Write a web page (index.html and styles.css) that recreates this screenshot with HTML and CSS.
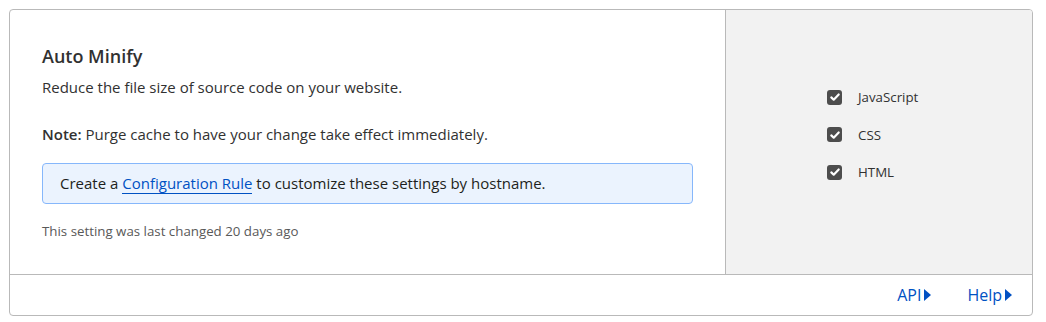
FILE: index.html
```html
<!DOCTYPE html>
<html lang="en">
<head>
    <meta charset="UTF-8">
    <title>Auto Minify</title>
    <link rel="stylesheet" href="styles.css">
</head>
<body>
    <div class="setting-card">
        <div class="setting-main">
            <div class="setting-info">
                <h2 class="setting-title">Auto Minify</h2>
                <p class="setting-desc">Reduce the file size of source code on your website.</p>
                <p class="setting-note"><strong>Note:</strong> Purge cache to have your change take effect immediately.</p>
                <div class="info-box">
                    Create a <a href="#" class="link">Configuration Rule</a> to customize these settings by hostname.
                </div>
                <p class="last-changed">This setting was last changed 20 days ago</p>
            </div>
            <div class="setting-control">
                <ul class="check-list">
                    <li><span class="check"><svg viewBox="0 0 14 14" width="14" height="14"><path d="M3.3 7.4l2.4 2.3 5-5.2" fill="none" stroke="#fff" stroke-width="2.2" stroke-linecap="round" stroke-linejoin="round"/></svg></span>JavaScript</li>
                    <li><span class="check"><svg viewBox="0 0 14 14" width="14" height="14"><path d="M3.3 7.4l2.4 2.3 5-5.2" fill="none" stroke="#fff" stroke-width="2.2" stroke-linecap="round" stroke-linejoin="round"/></svg></span>CSS</li>
                    <li><span class="check"><svg viewBox="0 0 14 14" width="14" height="14"><path d="M3.3 7.4l2.4 2.3 5-5.2" fill="none" stroke="#fff" stroke-width="2.2" stroke-linecap="round" stroke-linejoin="round"/></svg></span>HTML</li>
                </ul>
            </div>
        </div>
        <div class="setting-footer">
            <a href="#" class="footer-link">API<span class="arrow"></span></a>
            <a href="#" class="footer-link">Help<span class="arrow"></span></a>
        </div>
    </div>
</body>
</html>
```

FILE: styles.css
```css
* {
    margin: 0;
    padding: 0;
    box-sizing: border-box;
}

body {
    font-family: 'Segoe UI', 'Open Sans', 'Noto Sans', sans-serif;
    background: #fff;
    color: #313131;
    padding: 9px 13px 6px 9px;
}

.setting-card {
    border: 1px solid #b9b9b9;
    border-radius: 4px;
    overflow: hidden;
}

.setting-main {
    display: flex;
    height: 265px;
    border-bottom: 1px solid #b9b9b9;
}

.setting-info {
    flex: 1;
    padding: 34px 32px 0 32px;
}

.setting-title {
    font-size: 18px;
    font-weight: 600;
    line-height: 24px;
    color: #313131;
    margin-bottom: 9px;
}

.setting-desc,
.setting-note {
    font-size: 15px;
    line-height: 20px;
}

.setting-desc {
    margin-bottom: 27px;
}

.setting-note {
    margin-bottom: 19px;
}

.setting-note strong {
    font-weight: 600;
}

.info-box {
    width: 651px;
    height: 41px;
    background: #ebf3fe;
    border: 1px solid #86b7fb;
    border-radius: 4px;
    font-size: 15px;
    line-height: 39px;
    padding-left: 17px;
    color: #1d1f20;
}

.link {
    color: #0051c3;
    text-decoration: none;
    border-bottom: 1px solid #0051c3;
}

.last-changed {
    font-size: 13.3px;
    color: #595959;
    margin-top: 18px;
}

.setting-control {
    width: 307px;
    background: #f2f2f2;
    border-left: 1px solid #b9b9b9;
    padding: 78px 0 0 101px;
}

.check-list {
    list-style: none;
}

.check-list li {
    display: flex;
    align-items: center;
    font-size: 13.3px;
    line-height: 18px;
    color: #313131;
    height: 18px;
    margin-bottom: 19.5px;
}

.check {
    width: 15px;
    height: 15px;
    background: #4d4d4d;
    border-radius: 3px;
    margin-right: 16px;
    display: flex;
    align-items: center;
    justify-content: center;
}

.setting-footer {
    height: 40px;
    display: flex;
    justify-content: flex-end;
    align-items: center;
    gap: 36px;
    padding-right: 20px;
}

.footer-link {
    color: #0051c3;
    text-decoration: none;
    font-size: 16px;
    display: flex;
    align-items: center;
}

.arrow {
    width: 0;
    height: 0;
    border-top: 6px solid transparent;
    border-bottom: 6px solid transparent;
    border-left: 7px solid #0051c3;
    margin-left: 3px;
}
```
